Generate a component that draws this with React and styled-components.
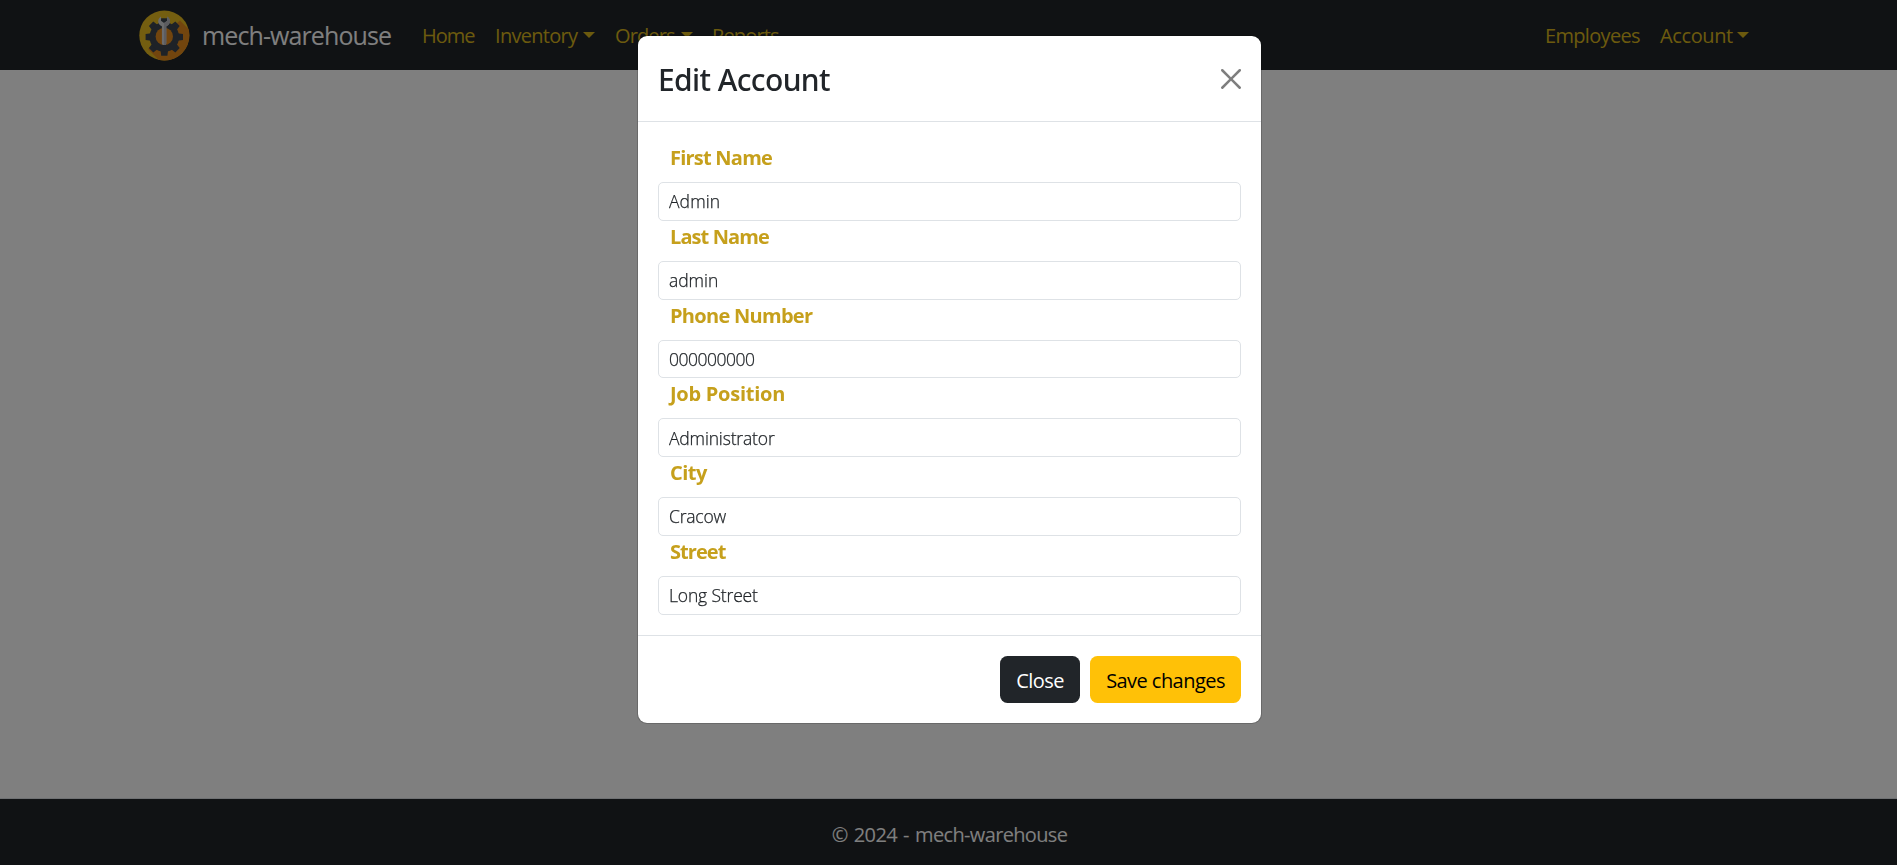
import React from 'react';
import styled, { createGlobalStyle } from 'styled-components';

const GlobalStyle = createGlobalStyle`
  *, *::before, *::after { box-sizing: border-box; }
  html { font-size: 20px; }
  body {
    margin: 0;
    overflow: hidden;
    background: #fff;
    color: #212529;
    font-family: "Segoe UI", "Open Sans", "Noto Sans", sans-serif;
    line-height: 1.5;
  }
`;

const Page = styled.div`
  display: flex;
  flex-direction: column;
  height: 100vh;
`;

const Navbar = styled.header`
  display: flex;
  align-items: center;
  height: 70px;
  padding: 0 147px 0 139px;
  background: #212529;
`;

const Brand = styled.a`
  display: flex;
  align-items: center;
  gap: 12px;
  width: 273px;
  color: #fff;
  font-size: 25px;
  letter-spacing: -0.9px;
  white-space: nowrap;

  span { padding-top: 2px; }
`;

const Logo = styled.svg`
  flex: none;
  width: 51px;
  height: 51px;
`;

const NavList = styled.nav`
  display: flex;
  flex: ${(p) => (p.$grow ? 1 : 'none')};
`;

const NavLink = styled.a`
  display: flex;
  align-items: center;
  width: ${(p) => p.$width}px;
  padding: 2px 0 0 10px;
  color: #d9b51c;
  letter-spacing: ${(p) => p.$spacing}px;
  white-space: nowrap;

  ${(p) => p.$menu && `
    &::after {
      content: "";
      margin: -2px 0 0 ${p.$gap || 6}px;
      border: 6px solid transparent;
      border-top-color: currentColor;
      border-bottom: 0;
    }
  `}
`;

const Main = styled.main`
  flex: 1;
`;

const Footer = styled.footer`
  display: flex;
  justify-content: center;
  height: 67px;
  padding: 21px 0 0 2px;
  border-top: 1px solid #dee2e6;
  background: #212529;
  background-clip: padding-box;
  color: #fff;
  letter-spacing: -0.65px;
  word-spacing: 1.6px;
`;

const Backdrop = styled.div`
  position: fixed;
  inset: 0;
  background: rgba(0, 0, 0, 0.5);
`;

const Dialog = styled.section`
  position: absolute;
  top: 35px;
  left: 637px;
  width: 625px;
  border: 1px solid rgba(0, 0, 0, 0.175);
  border-radius: 10px;
  background: #fff;
  background-clip: padding-box;
`;

const DialogHeader = styled.div`
  display: flex;
  align-items: center;
  justify-content: space-between;
  height: 86px;
  padding: 0 20px;
  border-bottom: 1px solid #dee2e6;
`;

const DialogTitle = styled.h1`
  margin: 0;
  padding-top: 1px;
  font-family: "Noto Sans", sans-serif;
  font-size: 30px;
  font-weight: 500;
  letter-spacing: -0.61px;
`;

const CloseIcon = styled.svg`
  width: 20px;
  height: 20px;
  opacity: 0.5;
`;

const Form = styled.form`
  padding: 20px;
`;

const Field = styled.label`
  display: block;
  height: 78.75px;

  &:last-child { height: 79px; }
`;

const FieldName = styled.span`
  display: block;
  height: 40px;
  padding: 1px 0 0 12px;
  color: #c6a01c;
  font-weight: 700;
  letter-spacing: ${(p) => p.$spacing}px;
`;

const Input = styled.input`
  display: block;
  width: 100%;
  height: 38.75px;
  padding: 0 10px;
  border: 1px solid #dee2e6;
  border-radius: 5px;
  outline: 0;
  color: #212529;
  font: 300 17.5px "Open Sans", sans-serif;
  letter-spacing: ${(p) => p.$spacing}px;
  -webkit-text-stroke: 0.25px currentColor;
`;

const Actions = styled.div`
  display: flex;
  justify-content: flex-end;
  gap: 10px;
  padding: 20px;
  border-top: 1px solid #dee2e6;
`;

const Button = styled.button`
  width: ${(p) => p.$width}px;
  height: 47px;
  padding: 2px 0 0;
  border: 0;
  border-radius: 7.5px;
  background: ${(p) => (p.$primary ? '#ffc107' : '#212529')};
  color: ${(p) => (p.$primary ? '#000' : '#fff')};
  font: 400 20px "Open Sans", sans-serif;
  letter-spacing: -0.55px;
`;

const FIELDS = [
  ['First Name', -0.77, 'Admin', 0.1],
  ['Last Name', -0.9, 'admin', -0.05],
  ['Phone Number', -0.71, '000000000', -0.5],
  ['Job Position', -0.26, 'Administrator', -0.16],
  ['City', -0.5, 'Cracow', -0.2],
  ['Street', -0.95, 'Long Street', -0.16],
];

const TEETH = [0, 45, 90, 135, 180, 225, 270, 315];

function GearLogo() {
  return (
    <Logo viewBox="0 0 51 51">
      <circle cx="25.3" cy="25.5" r="25" fill="#e8bc20" />
      <path d="M9 39 L41 10.5 L49.5 19 A25 25 0 0 1 19.5 49.8 Z" fill="#e58a1c" />
      <g fill="#3c444f">
        {TEETH.map((a) => (
          <path key={a} d="M21.5 14 L22.2 8.3 H28.4 L29.1 14 Z" transform={`rotate(${a} 25.3 27)`} />
        ))}
        <circle cx="25.3" cy="27" r="14.8" />
      </g>
      <circle cx="25.3" cy="26.4" r="8.7" fill="#e58a1c" />
      <path
        d="M22 6.4 V10.7 L25.1 13 L28.2 10.7 V6.4 C32.6 9.2 31.4 14.8 27.3 16.2 V33.4 Q27.3 35 25.1 35 Q22.9 35 22.9 33.4 V16.2 C18.8 14.8 17.6 9.2 22 6.4 Z"
        fill="#d5d6da"
      />
      <path d="M25.1 13 L28.2 10.7 V6.4 C32.6 9.2 31.4 14.8 27.3 16.2 V33.4 Q27.3 35 25.1 35 Z" fill="#b8b9c0" />
    </Logo>
  );
}

export default function App() {
  return (
    <>
      <GlobalStyle />
      <Page>
        <Navbar>
          <Brand>
            <GearLogo />
            <span>mech-warehouse</span>
          </Brand>
          <NavList $grow>
            <NavLink $width={73} $spacing={-1}>Home</NavLink>
            <NavLink $width={120} $spacing={-0.7} $menu>Inventory</NavLink>
            <NavLink $width={97} $spacing={-0.87} $menu>Orders</NavLink>
            <NavLink $width={86} $spacing={-0.86}>Reports</NavLink>
          </NavList>
          <NavList>
            <NavLink $width={115} $spacing={-0.68}>Employees</NavLink>
            <NavLink $width={100} $spacing={-0.39} $menu $gap={4}>Account</NavLink>
          </NavList>
        </Navbar>
        <Main />
        <Footer>© 2024 - mech-warehouse</Footer>
      </Page>
      <Backdrop>
        <Dialog role="dialog" aria-modal="true">
          <DialogHeader>
            <DialogTitle>Edit Account</DialogTitle>
            <CloseIcon viewBox="0 0 16 16">
              <path d="M.293.293a1 1 0 0 1 1.414 0L8 6.586 14.293.293a1 1 0 1 1 1.414 1.414L9.414 8l6.293 6.293a1 1 0 0 1-1.414 1.414L8 9.414l-6.293 6.293a1 1 0 0 1-1.414-1.414L6.586 8 .293 1.707a1 1 0 0 1 0-1.414z" />
            </CloseIcon>
          </DialogHeader>
          <Form>
            {FIELDS.map(([name, nameSpacing, value, valueSpacing]) => (
              <Field key={name}>
                <FieldName $spacing={nameSpacing}>{name}</FieldName>
                <Input $spacing={valueSpacing} defaultValue={value} />
              </Field>
            ))}
          </Form>
          <Actions>
            <Button $width={80}>Close</Button>
            <Button $width={151} $primary>Save changes</Button>
          </Actions>
        </Dialog>
      </Backdrop>
    </>
  );
}
